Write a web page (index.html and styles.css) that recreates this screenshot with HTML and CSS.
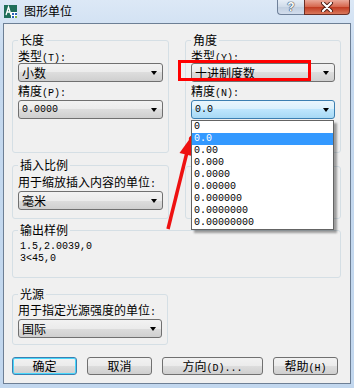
FILE: index.html
```html
<!DOCTYPE html>
<html>
  <head>
    <title>图形单位</title>
    <link rel="stylesheet" href="styles.css">
  </head>
  <body>
    <div class="window">
      <div class="titlebar">
        <svg class="app-icon" width="13" height="13" viewBox="0 0 13 13">
          <rect x="0" y="0" width="13" height="13" fill="#1f6e5a"/>
          <path d="M2 10 L4.5 2 L7 10 M3.2 7 L5.8 7" stroke="#ffffff" stroke-width="1.3" fill="none"/>
          <rect x="7" y="7" width="6" height="6" fill="#ffffff"/>
          <rect x="8" y="8" width="2" height="2" fill="#2a63b8"/>
          <rect x="11" y="8" width="2" height="2" fill="#2a63b8"/>
          <rect x="8" y="11" width="2" height="2" fill="#2a63b8"/>
          <rect x="11" y="11" width="2" height="2" fill="#7fb24a"/>
        </svg>
        <span class="title">图形单位</span>
        <div class="caption-buttons">
          <span class="cap-help">?</span>
          <span class="cap-close">
            <svg width="14" height="10" viewBox="0 0 14 10">
              <path d="M3 1 L11 9 M11 1 L3 9" stroke="#4b1b12" stroke-width="4" stroke-linecap="round"/>
              <path d="M3 1 L11 9 M11 1 L3 9" stroke="#ffffff" stroke-width="2.2" stroke-linecap="round"/>
            </svg>
          </span>
        </div>
      </div>

      <div class="client">
        <div class="row">
          <fieldset class="group">
            <legend>长度</legend>
            <div class="label label-top">类型<span class="num">(T):</span></div>
            <div class="select"><span>小数</span><i class="arrow"></i></div>
            <div class="label label-gap">精度<span class="num">(P):</span></div>
            <div class="select select-gap"><span class="num">0.0000</span><i class="arrow"></i></div>
          </fieldset>
          <fieldset class="group">
            <legend>角度</legend>
            <div class="label label-top">类型<span class="num">(Y):</span></div>
            <div class="select"><span>十进制度数</span><i class="arrow"></i></div>
            <div class="label label-gap">精度<span class="num">(N):</span></div>
            <div class="select select-gap select-focus">
              <span class="num">0.0</span><i class="arrow"></i>
              <ul class="dropdown">
                <li>0</li>
                <li class="active">0.0</li>
                <li>0.00</li>
                <li>0.000</li>
                <li>0.0000</li>
                <li>0.00000</li>
                <li>0.000000</li>
                <li>0.0000000</li>
                <li>0.00000000</li>
              </ul>
            </div>
          </fieldset>
        </div>

        <div class="row row-scale">
          <fieldset class="group group-scale">
            <legend>插入比例</legend>
            <div class="label label-scale">用于缩放插入内容的单位<span class="num">:</span></div>
            <div class="select select-gap"><span>毫米</span><i class="arrow"></i></div>
          </fieldset>
          <fieldset class="group group-blank"></fieldset>
        </div>

        <fieldset class="group wide group-sample">
          <legend>输出样例</legend>
          <div class="sample sample-first num">1.5,2.0039,0</div>
          <div class="sample num">3&lt;45,0</div>
        </fieldset>

        <fieldset class="group wide group-light">
          <legend>光源</legend>
          <div class="label label-gap">用于指定光源强度的单位<span class="num">:</span></div>
          <div class="select select-gap"><span>国际</span><i class="arrow"></i></div>
        </fieldset>

        <div class="buttons">
          <button class="btn btn-default">确定</button>
          <button class="btn">取消</button>
          <button class="btn btn-wide">方向<span class="num">(D)...</span></button>
          <button class="btn">帮助<span class="num">(H)</span></button>
        </div>
      </div>

      <!-- red annotation marks drawn over the dialog -->
      <svg class="marks" width="354" height="388" viewBox="0 0 354 388">
        <rect x="179.5" y="61.5" width="130" height="18" fill="none" stroke="#ff0000" stroke-width="3"/>
        <ellipse cx="207" cy="139" rx="17" ry="5.5" fill="none" stroke="#ee1111" stroke-width="2.5"/>
        <line x1="168" y1="229" x2="186.8" y2="153" stroke="#ee1111" stroke-width="3.5"/>
        <polygon points="191,137 194,156.5 179.5,153" fill="#ee1111"/>
      </svg>
    </div>
  </body>
</html>
```

FILE: styles.css
```css
body {
  margin: 0;
  font-family: "Noto Sans CJK SC", "Liberation Sans", sans-serif;
  font-size: 12px;
  color: #000000;
  background-color: #c8dbef;
}

.window {
  position: relative;
  width: 354px;
  height: 388px;
  box-sizing: border-box;
  padding: 0 3px 4px 3px;
  overflow: hidden;
  background: linear-gradient(#dce8f6, #c5d9ef 60px, #c2d7ee);
}

.num {
  font-family: "Liberation Mono", monospace;
  font-size: 10px;
  line-height: 1;
}

/* title bar */
.titlebar {
  height: 23px;
  display: flex;
  align-items: center;
}

.app-icon {
  margin: 0 7px 1px 1px;
}

.title {
  font-size: 12px;
  line-height: 14px;
  margin-bottom: 1px;
}

.caption-buttons {
  margin-left: auto;
  margin-right: 1px;
  align-self: flex-start;
  display: flex;
  height: 15px;
}

.cap-help {
  width: 27px;
  height: 15px;
  box-sizing: border-box;
  border: 1px solid #6f819a;
  border-top: none;
  border-right: none;
  border-radius: 0 0 0 4px;
  background: linear-gradient(#e6eef7, #cfdbe9 50%, #c1cfe0 50%, #d2dded);
  color: #ffffff;
  font-family: "Liberation Sans", sans-serif;
  font-weight: bold;
  font-size: 12px;
  line-height: 14px;
  text-align: center;
  text-shadow: 0 0 1px #2c3e55, 0 0 1px #2c3e55, 0 0 1px #2c3e55;
}

.cap-close {
  width: 46px;
  height: 15px;
  box-sizing: border-box;
  border: 1px solid #6b2f26;
  border-top: none;
  border-radius: 0 0 4px 0;
  background: linear-gradient(#eaa899, #d5654b 50%, #c0391f 50%, #d9785c);
  display: flex;
  align-items: center;
  justify-content: center;
}

/* dialog body */
.client {
  height: 361px;
  box-sizing: border-box;
  border: 1px solid #6d7f95;
  background-color: #f0f0f0;
  padding: 9px 9px 0 8px;
}

.row {
  display: flex;
  align-items: flex-start;
  gap: 16px;
}

.group {
  box-sizing: border-box;
  margin: 0;
  min-width: 0;
  width: 157px;
  padding: 0 5px 33px 5px;
  border: 1px solid #d5dfe5;
  border-radius: 3px;
}

.group + .group {
  width: 156px;
}

.group legend {
  height: 14px;
  padding: 0 2px;
  font-size: 12px;
  line-height: 14px;
}

.label {
  height: 14px;
  line-height: 14px;
  margin-top: 1px;
  white-space: nowrap;
}

.label-top {
  margin-top: 2px;
}

.label-gap {
  margin-top: 2px;
}

.label-scale {
  margin-top: 3px;
}

.select {
  position: relative;
  height: 19px;
  margin-top: 0;
  box-sizing: border-box;
  border: 1px solid #707070;
  border-radius: 3px;
  background: linear-gradient(#f2f2f2, #ebebeb 50%, #dddddd 50%, #cfcfcf);
  padding: 0 5px 0 3px;
  display: flex;
  align-items: center;
  justify-content: space-between;
  line-height: 17px;
}

.select-gap {
  margin-top: 2px;
}

.select-focus {
  border-color: #3c7fb1;
  background: linear-gradient(#eaf6fd, #d9f0fc 50%, #bee6fd 50%, #a7d9f5);
}

.arrow {
  width: 0;
  height: 0;
  border-top: 4px solid #000000;
  border-left: 3.5px solid transparent;
  border-right: 3.5px solid transparent;
}

.dropdown {
  position: absolute;
  z-index: 5;
  top: 19px;
  left: -1px;
  width: 143px;
  box-sizing: border-box;
  margin: 0;
  padding: 0;
  list-style: none;
  background-color: #ffffff;
  border: 1px solid #646464;
  box-shadow: 3px 3px 2px rgba(0, 0, 0, 0.35);
  font-family: "Liberation Mono", monospace;
  font-size: 10px;
}

.dropdown li {
  height: 12px;
  line-height: 12px;
  padding-left: 2px;
}

.dropdown .active {
  background-color: #3399ff;
  color: #ffffff;
}

.row-scale {
  margin-top: 5px;
}

.group-scale {
  padding-bottom: 8px;
}

.group-blank {
  margin-top: 8px;
  height: 53px;
  padding: 0;
}

.wide {
  width: 329px;
  display: block;
}

.group-sample {
  margin-top: 4px;
  padding-bottom: 12px;
}

.sample {
  height: 12px;
  line-height: 12px;
  padding-left: 2px;
}

.sample-first {
  margin-top: 4px;
}

.group-light {
  margin-top: 9px;
  padding-bottom: 6px;
}

/* bottom buttons */
.buttons {
  display: flex;
  gap: 10px;
  margin-top: 12px;
}

.btn {
  width: 65px;
  height: 18px;
  box-sizing: border-box;
  padding: 0;
  border: 1px solid #707070;
  border-radius: 3px;
  background: linear-gradient(#f2f2f2, #ebebeb 50%, #dddddd 50%, #cfcfcf);
  font-family: "Noto Sans CJK SC", "Liberation Sans", sans-serif;
  font-size: 12px;
  line-height: 16px;
  color: #000000;
}

.btn-wide {
  width: 101px;
}

.btn-default {
  border-color: #3c7fb1;
  box-shadow: inset 0 0 0 1px #48d7fb;
}

.marks {
  position: absolute;
  top: 0;
  left: 0;
  pointer-events: none;
}
```
